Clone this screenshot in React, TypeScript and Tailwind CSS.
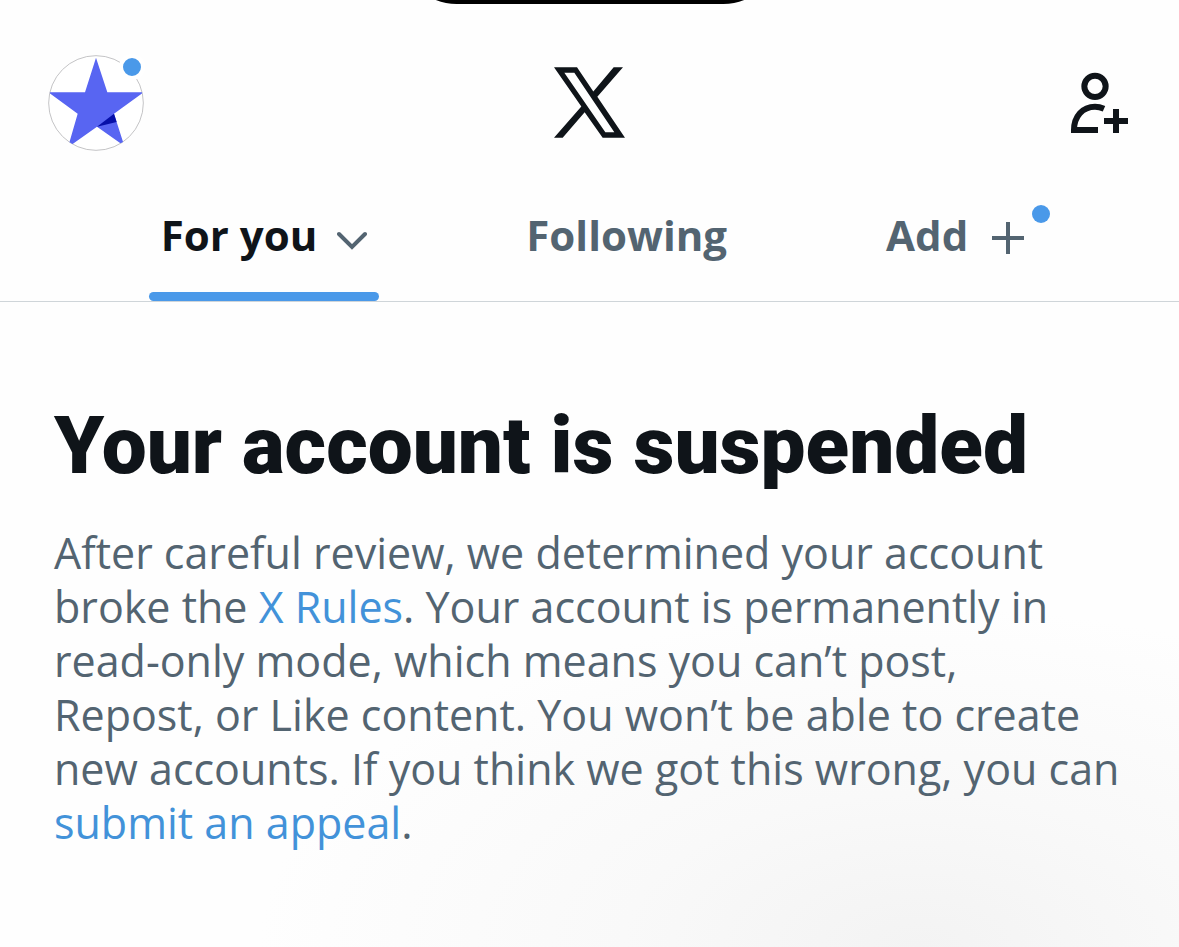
import React, { useState } from 'react'

type TabId = 'for-you' | 'following'

const AvatarImage: React.FC = () => (
  <svg viewBox="54 45 288 288" className="size-24" aria-hidden="true">
    <defs>
      <clipPath id="avatar-clip">
        <circle cx="198" cy="189" r="142" />
      </clipPath>
    </defs>
    <circle cx="198" cy="189" r="142" fill="#fff" stroke="#c4c4c6" strokeWidth="3" />
    <g clipPath="url(#avatar-clip)">
      <path
        d="M198 53 L232 157 H341 L252 221 L283 318 L201 260 L114 322 L143 221 L55 157 H165 Z"
        fill="#5865f2"
      />
      <path d="M252 221 L260 246 L201 260 Z" fill="#0710a8" />
    </g>
  </svg>
)

const XLogo: React.FC = () => (
  <svg viewBox="0 0 213 212" className="mb-0.5 size-[71px]" fill="#0f1419" role="img" aria-label="X">
    <path
      fillRule="evenodd"
      d="M0 0 H69 L118 73 L179 0 H207 L130 89 L213 212 H146 L92 135 L26 212 H0 L82 118 Z M31 17 H61 L181 195 H154 Z"
    />
  </svg>
)

const AddPersonIcon: React.FC = () => (
  <svg
    viewBox="60 36 183 186"
    className="h-[62px] w-[61px]"
    fill="none"
    stroke="#0f1419"
    strokeWidth="18"
    aria-hidden="true"
  >
    <circle cx="135" cy="79" r="32" />
    <path d="M144 210 H72 C72 169 98 140 135 140 C145 140 153 142 162 146" />
    <path d="M162 183 H234 M198 147 V219" />
  </svg>
)

const ActiveBar: React.FC = () => (
  <span className="absolute inset-x-0 bottom-0 h-[9px] rounded-full bg-[#4a99e9]" />
)

const App: React.FC = () => {
  const [tab, setTab] = useState<TabId>('for-you')

  const tabClass = 'relative flex h-full items-center px-3 pb-2 text-[42px] font-bold'

  return (
    <div className="relative min-h-screen overflow-hidden bg-white bg-[radial-gradient(ellipse_660px_340px_at_78%_100%,#f3f3f3,#f9f9f9_45%,#fdfdfd_90%,#fefefe)] font-['Open_Sans',sans-serif] text-[#0f1419]">
      {/* Device camera cutout */}
      <div className="absolute -top-[107px] left-1/2 h-[111px] w-[378px] -translate-x-1/2 rounded-full bg-black" />

      <header className="border-b border-[#cfd5d9]">
        <div className="grid grid-cols-[1fr_auto_1fr] items-center px-12 pt-[55px]">
          <button type="button" aria-label="Open profile menu" className="relative justify-self-start">
            <AvatarImage />
            <span className="absolute -right-px -top-px size-[26px] rounded-full border-4 border-white bg-[#4a99e9]" />
          </button>
          <XLogo />
          <button type="button" aria-label="Find people to follow" className="justify-self-end">
            <AddPersonIcon />
          </button>
        </div>

        <nav className="mt-6 flex h-[126px] justify-center gap-[135px] pl-1.5">
          <button
            type="button"
            onClick={() => setTab('for-you')}
            className={`${tabClass} gap-5 ${tab === 'for-you' ? 'text-[#0f1419]' : 'text-[#536471]'}`}
          >
            For you
            <svg
              viewBox="1 0 30 20"
              className="mt-3 h-5 w-[30px]"
              fill="none"
              stroke="#536471"
              strokeWidth="4"
              strokeLinecap="round"
              aria-hidden="true"
            >
              <path d="M3 4 L16 17 L29 4" />
            </svg>
            {tab === 'for-you' && <ActiveBar />}
          </button>
          <button
            type="button"
            onClick={() => setTab('following')}
            className={`${tabClass} ${tab === 'following' ? 'text-[#0f1419]' : 'text-[#536471]'}`}
          >
            Following
            {tab === 'following' && <ActiveBar />}
          </button>
          <button type="button" className={`${tabClass} gap-6 text-[#536471]`}>
            Add
            <svg viewBox="0 0 32 32" className="mt-2 size-8" fill="none" stroke="currentColor" strokeWidth="4" aria-hidden="true">
              <path d="M0 16 H32 M16 0 V32" />
            </svg>
            <span className="absolute -right-3.5 top-[30px] size-[18px] rounded-full bg-[#4a99e9]" />
          </button>
        </nav>
      </header>

      <main className="px-[54px] pt-24">
        <h1 className="font-[Roboto,sans-serif] text-[80px] font-black leading-[96px]">
          Your account is suspended
        </h1>
        <p className="mt-8 text-[43px] leading-[54px] text-[#536471]">
          After careful review, we determined your account broke the{' '}
          <a href="#rules" className="text-[#4292d9]">X Rules</a>. Your account is permanently in
          read-only mode, which means you can’t post,
          <br />
          Repost, or Like content. You won’t be able to create new accounts. If you think we got
          this wrong, you can{' '}
          <a href="#appeal" className="text-[#4292d9]">submit an appeal</a>.
        </p>
      </main>
    </div>
  )
}

export default App
